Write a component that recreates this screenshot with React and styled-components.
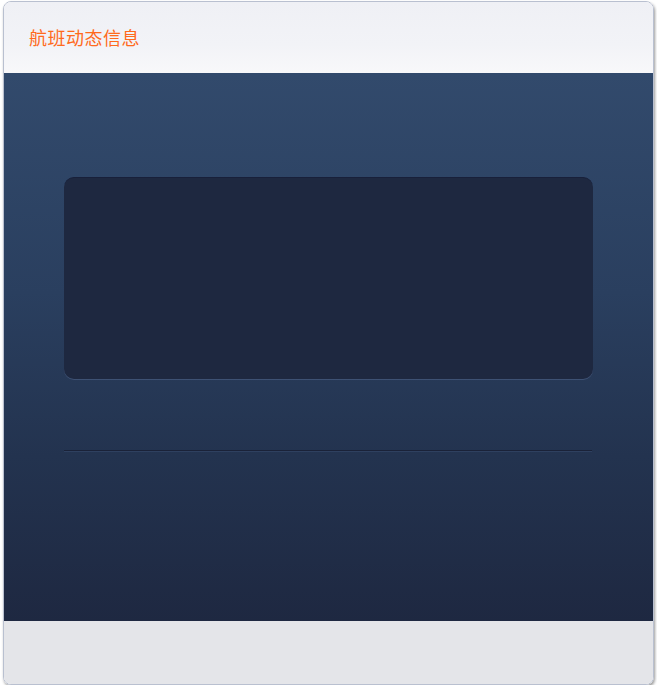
import React from 'react';
import styled, { createGlobalStyle } from 'styled-components';

const GlobalStyle = createGlobalStyle`
  html, body {
    margin: 0;
    padding: 0;
    background: #ffffff;
  }
  body {
    font-family: "Liberation Sans", "Noto Sans CJK SC", sans-serif;
  }
`;

const Panel = styled.div`
  width: 651px;
  margin: 1px 0 0 3px;
  box-sizing: border-box;
  border: 1px solid #b9c0d0;
  border-radius: 8px;
  overflow: hidden;
  box-shadow: 1px 2px 3px rgba(0, 0, 0, 0.4);
  display: flex;
  flex-direction: column;
`;

const Header = styled.div`
  height: 71px;
  display: flex;
  align-items: center;
  padding: 0 0 0 25px;
  background: linear-gradient(180deg, #eff0f5 0%, #f2f3f7 60%, #f8f8fa 100%);
`;

const Title = styled.h1`
  margin: 0 0 2px 0;
  font-size: 18px;
  line-height: 22px;
  font-weight: normal;
  color: #ff6a1c;
  font-family: "Noto Sans CJK SC", "Liberation Sans", sans-serif;
  letter-spacing: 0.5px;
`;

const Body = styled.div`
  height: 548px;
  box-sizing: border-box;
  padding: 104px 60px 0 60px;
  background: linear-gradient(180deg, #324a6c 0%, #2a3f5f 40%, #23334f 70%, #1e2841 100%);
  display: flex;
  flex-direction: column;
`;

const Card = styled.div`
  height: 202px;
  width: 529px;
  box-sizing: border-box;
  border-radius: 10px;
  background: #1e2840;
  border-top: 1px solid #18203a;
  box-shadow: 0 1px 0 rgba(90, 110, 150, 0.45);
`;

const Divider = styled.div`
  width: 528px;
  margin-top: 71px;
  height: 1px;
  background: #1a2238;
  box-shadow: 0 1px 0 rgba(70, 90, 125, 0.35);
`;

const Footer = styled.div`
  height: 63px;
  background: #e4e5e9;
`;

export default function App() {
  return (
    <>
      <GlobalStyle />
      <Panel>
        <Header>
          <Title>航班动态信息</Title>
        </Header>
        <Body>
          <Card />
          <Divider />
        </Body>
        <Footer />
      </Panel>
    </>
  );
}
